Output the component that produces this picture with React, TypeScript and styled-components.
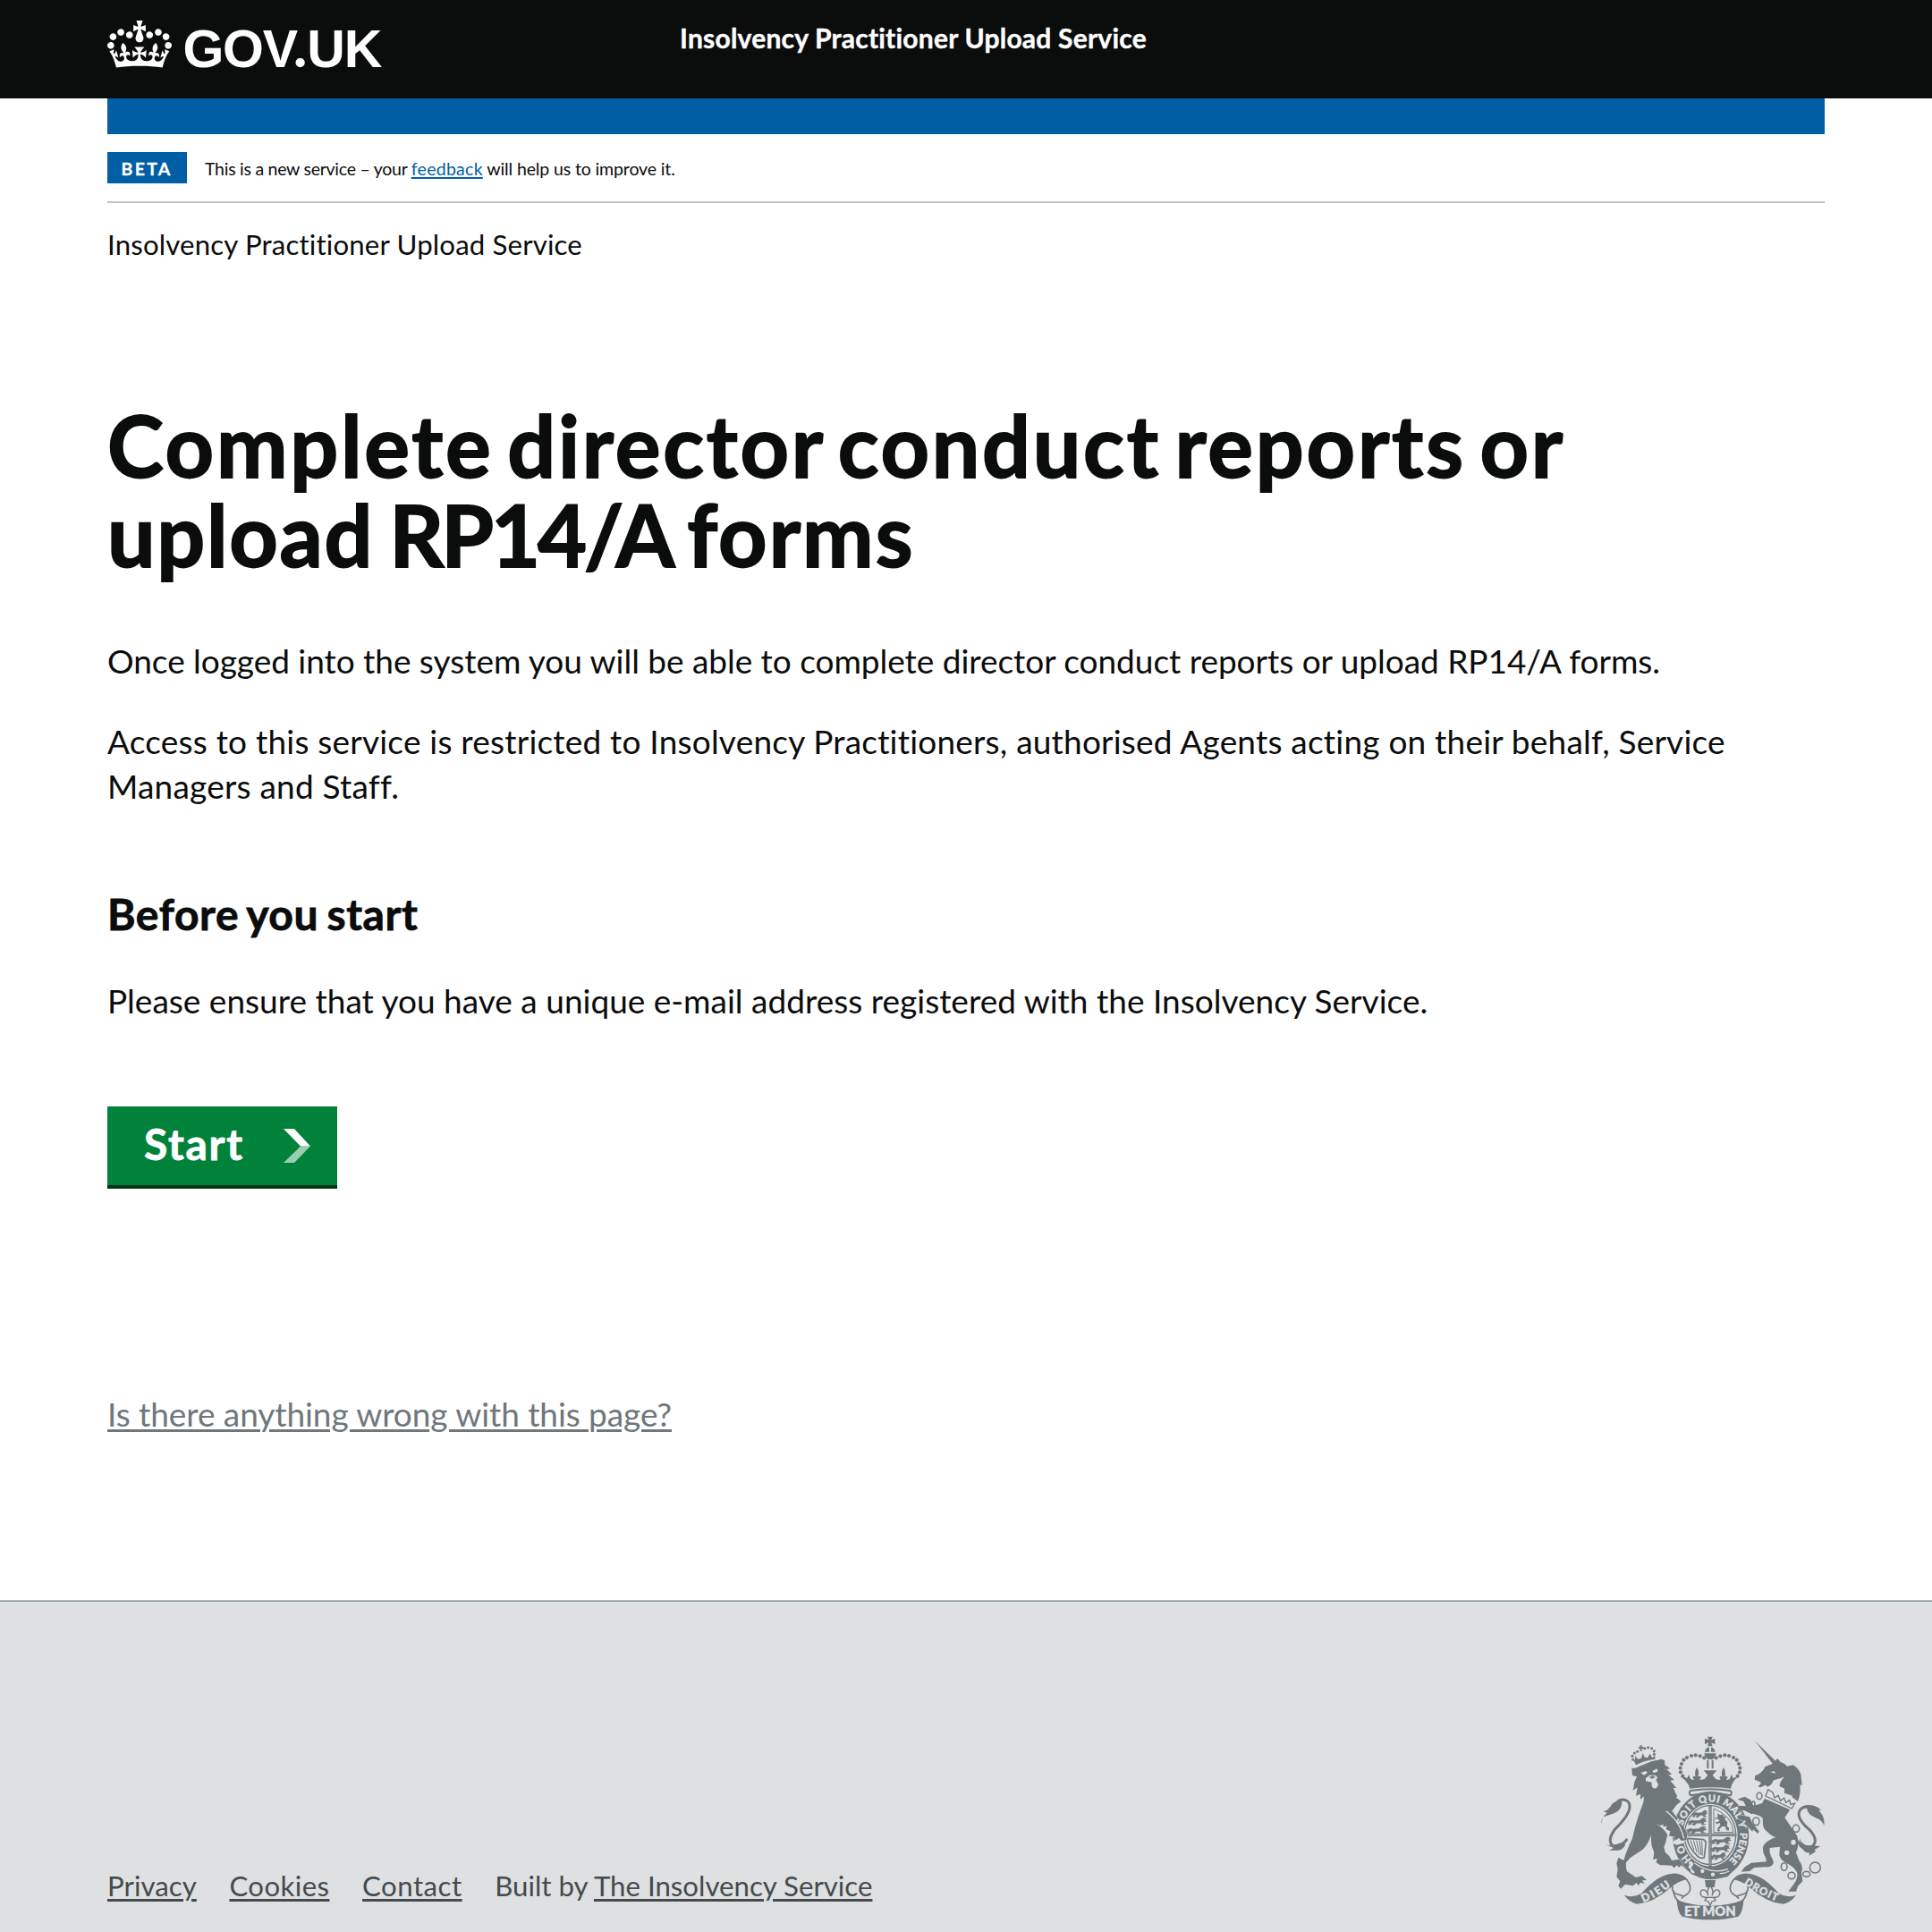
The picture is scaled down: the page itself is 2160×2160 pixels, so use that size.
import React from "react";
import styled, { createGlobalStyle } from "styled-components";

const INK = "#0b0c0c";
const BLUE = "#005ea5";
const CREST = "#6f777b";
const GREY = "#dee0e2";

const GlobalStyle = createGlobalStyle`
  body {
    margin: 0;
    background: #fff;
    color: ${INK};
    font-family: Lato, "Open Sans", sans-serif;
  }
`;

const Page = styled.div`
  display: flex;
  flex-direction: column;
  height: 2160px;
  overflow: hidden;
`;

const Header = styled.header`
  display: grid;
  grid-template-columns: 640px 1fr;
  align-items: start;
  box-sizing: border-box;
  height: 110px;
  padding: 0 120px;
  background: ${INK};
  color: #fff;
`;

const Logo = styled.a`
  display: flex;
  align-items: flex-start;
  padding-top: 20px;
  gap: 12.5px;
  color: #fff;
`;

const CrownIcon = styled.svg`
  display: block;
  width: 72px;
  height: 53px;
  margin-top: 3px;
  fill: currentColor;
`;

const LogoText = styled.span`
  display: block;
  font: 700 59px/60px "Liberation Sans", Arial, sans-serif;
  letter-spacing: -1.3px;
`;

const LogoDot = styled.span`
  display: inline-block;
  width: 15.2px;
  margin-left: -3.6px;
  text-align: center;
  font: 900 62px/1 Lato, sans-serif;
  letter-spacing: 0;
`;

const ServiceName = styled.span`
  padding: 24px 0 0 0;
  font-size: 30px;
  font-weight: 700;
  line-height: 36px;
  letter-spacing: 0.22px;
  -webkit-text-stroke: 0.4px #fff;
`;

const Container = styled.div`
  display: flex;
  flex-direction: column;
  align-items: flex-start;
  margin: 0 120px;
`;

const BlueBar = styled.div`
  width: 100%;
  height: 40px;
  background: ${BLUE};
`;

const PhaseBanner = styled.div`
  display: flex;
  align-items: center;
  gap: 20px;
  width: 100%;
  padding: 20px 0;
  border-bottom: 2px solid #bfc1c3;
`;

const PhaseTag = styled.strong`
  box-sizing: border-box;
  width: 89px;
  height: 35px;
  padding: 1px 0 0 15.5px;
  background: ${BLUE};
  color: #fff;
  font-size: 19.5px;
  line-height: 35px;
  letter-spacing: 2.3px;
  -webkit-text-stroke: 0.3px #fff;
`;

const PhaseText = styled.span`
  font-size: 19.5px;
  line-height: 33px;
  padding-top: 2px;
  white-space: pre;
`;

const Track = styled.span<{ $spacing: number; $word?: number }>`
  letter-spacing: ${(p) => p.$spacing}px;
  word-spacing: ${(p) => p.$word ?? 0}px;
`;

const FeedbackLink = styled.a`
  color: ${BLUE};
  letter-spacing: 0.27px;
  text-decoration: underline;
  text-decoration-thickness: 2px;
  text-underline-offset: 2px;
`;

const Proposition = styled.p`
  margin: 26px 0 0;
  font-size: 31.2px;
  line-height: 40px;
  letter-spacing: 0.16px;
`;

const Title = styled.h1`
  display: flex;
  flex-direction: column;
  margin: 154px 0 0;
  font-size: 95px;
  line-height: 100px;
  -webkit-text-stroke: 1.8px ${INK};
  white-space: nowrap;
`;

const Paragraph = styled.p<{ $top: number; $spacing: number }>`
  margin: ${(p) => p.$top}px 0 0;
  width: 1820px;
  font-size: 37px;
  line-height: 50px;
  letter-spacing: ${(p) => p.$spacing}px;
`;

const Subtitle = styled.h2`
  margin: 88px 0 0;
  font-size: 48px;
  line-height: 60px;
  letter-spacing: 0.6px;
  word-spacing: -3px;
  -webkit-text-stroke: 0.8px ${INK};
`;

const StartButton = styled.a`
  display: flex;
  align-items: center;
  justify-content: space-between;
  box-sizing: border-box;
  width: 257px;
  height: 92px;
  margin-top: 93px;
  padding: 0 30px 0 41px;
  background: #00823b;
  border-bottom: 4px solid #003618;
  color: #fff;
  font-size: 48px;
  font-weight: 700;
  line-height: 84px;
  letter-spacing: 1.7px;
  -webkit-text-stroke: 0.8px #fff;
`;

const StartLabel = styled.span`
  padding-bottom: 3px;
`;

const Chevron = styled.svg`
  display: block;
  width: 30px;
  height: 38px;
`;

const ProblemLink = styled.a`
  margin-top: 227px;
  color: ${CREST};
  font-size: 37px;
  line-height: 50px;
  letter-spacing: -0.07px;
  text-decoration: underline;
  text-decoration-thickness: 3px;
  text-underline-offset: 3px;
`;

const Footer = styled.footer`
  display: flex;
  justify-content: space-between;
  align-items: flex-start;
  flex: 1;
  box-sizing: border-box;
  margin-top: 183px;
  padding: 150px 120px 0;
  background: ${GREY};
  border-top: 2px solid #a1acb2;
  color: #454a4c;
`;

const FooterLinks = styled.nav`
  display: flex;
  gap: 36.6px;
  padding-top: 147px;
  font-size: 31.2px;
  line-height: 40px;
`;

const FooterLink = styled.a<{ $spacing?: number }>`
  letter-spacing: ${(p) => p.$spacing ?? 0}px;
  text-decoration: underline;
  text-decoration-thickness: 3px;
  text-underline-offset: 3px;
`;

const Crest = styled.svg`
  display: block;
  width: 250px;
  height: 206.67px;
`;

const Crown = () => (
  <CrownIcon viewBox="0 0 132 97">
    <path d="M25 30.2c3.5 1.5 7.7-.2 9.1-3.7 1.5-3.6-.2-7.8-3.9-9.2-3.6-1.4-7.6.3-9.1 3.9-1.4 3.5.3 7.5 3.9 9zM9 39.5c3.6 1.5 7.8-.2 9.2-3.7 1.5-3.6-.2-7.8-3.9-9.1-3.6-1.5-7.6.2-9.1 3.8-1.4 3.5.3 7.5 3.8 9zM4.4 57.2c3.5 1.5 7.7-.2 9.1-3.8 1.5-3.6-.2-7.7-3.9-9.1-3.5-1.5-7.6.3-9.1 3.8-1.4 3.5.3 7.6 3.9 9.1zm38.3-21.4c3.5 1.5 7.7-.2 9.1-3.8 1.5-3.6-.2-7.7-3.9-9.1-3.6-1.5-7.6.3-9.1 3.8-1.3 3.6.4 7.7 3.9 9.1zm64.4-5.6c-3.6 1.5-7.8-.2-9.1-3.7-1.5-3.6.2-7.8 3.8-9.2 3.6-1.4 7.7.3 9.2 3.9 1.3 3.5-.4 7.5-3.9 9zm15.9 9.3c-3.6 1.5-7.7-.2-9.1-3.7-1.5-3.6.2-7.8 3.7-9.1 3.6-1.5 7.7.2 9.2 3.8 1.5 3.5-.3 7.5-3.8 9zm4.7 17.7c-3.6 1.5-7.8-.2-9.2-3.8-1.5-3.6.2-7.7 3.9-9.1 3.6-1.5 7.7.3 9.2 3.8 1.3 3.5-.4 7.6-3.9 9.1zM89.3 35.8c-3.6 1.5-7.8-.2-9.2-3.8-1.4-3.6.2-7.7 3.9-9.1 3.6-1.5 7.7.3 9.2 3.8 1.4 3.6-.3 7.7-3.9 9.1zM69.7 17.7l8.9 4.7V9.3l-8.9 2.8c-.2-.3-.5-.6-.9-.9L72.4 0H59.6l3.5 11.2c-.3.3-.6.5-.9.9l-8.8-2.8v13.1l8.8-4.7c.3.3.6.7.9.9l-5 15.4v.1c-.2.8-.4 1.6-.4 2.4 0 4.1 3.1 7.5 7 8.1h.2c.3 0 .7.1 1 .1.4 0 .7 0 1-.1h.2c4-.6 7.1-4.1 7.1-8.1 0-.8-.1-1.7-.4-2.4V34l-5.1-15.4c.4-.2.7-.6 1-.9zM66 92.8c16.9 0 32.8 1.1 47.1 3.2 4-16.9 8.9-26.7 14-33.5l-9.6-3.4c1 4.9 1.1 7.2 0 10.2-1.5-1.4-3-4.3-4.2-8.7L108.6 76c2.8-2 5-3.2 7.5-3.3-4.4 9.4-10 11.9-13.6 11.2-4.3-.8-6.3-4.6-5.6-7.9 1-4.7 5.7-5.9 8-.5 4.3-8.7-3-11.4-7.6-8.8 7.1-7.2 7.9-13.5 2.1-21.1-8 6.1-8.1 12.3-4.5 20.8-4.7-5.4-12.1-2.5-9.5 6.2 3.4-5.2 7.9-2 7.2 3.1-.6 4.3-6.4 7.8-13.5 7.2-10.3-.9-10.9-8-11.2-13.8 2.5-.5 7.1 1.8 11 7.3L80.2 60c-4.1 4.4-8 5.3-12.3 5.4 1.4-4.4 8-11.6 8-11.6H55.5s6.4 7.2 7.9 11.6c-4.2-.1-8-1-12.3-5.4l1.4 16.4c3.9-5.5 8.5-7.7 10.9-7.3-.3 5.8-.9 12.8-11.1 13.8-7.2.6-12.9-2.9-13.5-7.2-.7-5 3.8-8.3 7.1-3.1 2.7-8.7-4.6-11.6-9.4-6.2 3.7-8.5 3.6-14.7-4.6-20.8-5.8 7.6-5 13.9 2.2 21.1-4.7-2.6-11.9.1-7.7 8.8 2.3-5.5 7.1-4.2 8.1.5.7 3.3-1.3 7.1-5.7 7.9-3.5.7-9-1.8-13.5-11.2 2.5.1 4.7 1.3 7.5 3.3l-4.7-15.4c-1.2 4.4-2.7 7.2-4.3 8.7-1.1-3-.9-5.3 0-10.2l-9.5 3.4c5 6.9 9.9 16.7 14 33.5 14.8-2.1 30.8-3.2 47.7-3.2z" />
  </CrownIcon>
);

const CROWN_PEARLS: [number, number][] = [
  [376, 104], [362, 98], [347, 95], [333, 97], [318, 103], [307, 111], [300, 124], [296, 138], [297, 152], [304, 165],
];
const LION_PEARLS: [number, number][] = [
  [137, 110], [135, 98], [142, 88], [152, 83], [176, 72], [188, 69], [200, 72], [208, 81], [208, 92],
];
const CHAIN: [number, number, number, number][] = [
  [561, 232, 9, 11], [541, 258, 5, 8], [550, 317, 11, 13], [684, 341, 11, 12],
  [644, 469, 10, 13], [669, 499, 12, 11], [719, 494, 12, 9], [748, 472, 18, 18],
];
const PASSANT =
  "M0 12c4-5 8-3 11-1l14-1c5-2 6-8 12-8l6 3-3 5 5 3-7 2-2 6 6 3h-10l-2-6-12 1-4 6h-8l4-7-5-1-3 7h-7l4-9c-3 0-4 2-6 5 0-5 2-8 6-8";

const RoyalArms = () => (
  <Crest viewBox="30 31 750 620" fill={CREST}>
    <defs>
      <path id="garter" d="M398 473A98 111 0 0 1 398 251A98 111 0 0 1 398 473" />
      <path id="ribbonLeft" d="M172 589Q225 568 276 524" />
      <path id="ribbonRight" d="M509 526Q560 562 632 590" />
    </defs>

    {/* crown */}
    <path d="M387 33h17l-4 11 12-5v19l-12-5 4 12h-17l4-12-13 5V39l13 5z" />
    <path d="M378 84q2-13 15-16v16zM399 68q12 3 14 16h-14zM376 89h40q-3 17-13 20h-13q-11-4-14-20zM385 111h6v29h-6zM401 111h6v29h-6z" />
    {CROWN_PEARLS.map(([x, y]) => (
      <g key={x + y}>
        <circle cx={x} cy={y} r="6.2" />
        <circle cx={792 - x} cy={y} r="6.2" />
      </g>
    ))}
    <path d="M303 166l16 6 5-12 7 16 12 2-6-9q6-7 10-2-5-14 4-31 10 14 4 31 7-5 10 2l-4 9 15-2 12-14-14-16h44l-14 16 12 14 15 2-4-9q3-7 10-2-6-17 4-31 9 17 4 31 4-5 10 2l-6 9 12-2 7-16 5 12 16-6q-22 22-24 41-66-8-137 0-4-19-31-41z" />
    <path d="M330 214q66-11 132 0 10 4 2 16-64-16-133 0-9-10-1-16z" fill="none" stroke={CREST} strokeWidth="6" />

    {/* garter and shield */}
    <ellipse cx="398" cy="364" rx="128" ry="148" />
    <ellipse cx="396" cy="363" rx="92" ry="105" fill={GREY} />
    <ellipse cx="396" cy="363" rx="86" ry="99" fill="none" stroke={CREST} strokeWidth="4" />
    <path d="M396 262v208M306 362h178" stroke={CREST} strokeWidth="10" />
    <path d="M396 266v200M310 362h172" stroke={GREY} strokeWidth="1.6" />
    <g stroke={CREST} strokeWidth="1.5">
      <path d={PASSANT} transform="translate(342 278)" />
      <path d={PASSANT} transform="translate(328 304) scale(1.25 1)" />
      <path d={PASSANT} transform="translate(323 332) scale(1.35 1)" />
      <path d={PASSANT} transform="translate(406 368) scale(1.35 1)" />
      <path d={PASSANT} transform="translate(406 394) scale(1.25 1)" />
      <path d={PASSANT} transform="translate(404 420) scale(1 1)" />
    </g>
    <path d="M408 274v80h66q-3-55-66-80z" fill="none" stroke={CREST} strokeWidth="3" />
    <path d="M420 290l10 6 8-4 2 8 10 2-6 6 10 12-2 12 8 8-2 8-8-2-4-12-10 0-10 10 4 6-10 0 2-12 8-8-2-8-10 4-6-8 8 2 8-6-8-6-8 2 2-6 8 0z" />
    <path d="M318 374l56 4 8 8-6 52q-14 6-22-4-28-26-36-60z" fill="none" stroke={CREST} strokeWidth="5" />
    <path d="M330 380l12 34M340 380l12 42M350 381l10 48M360 381l6 50M368 383l2 48" stroke={CREST} strokeWidth="3" />
    <path d="M345 458q60 40 110 20l14 8-14 16q-60 18-118-12z" />
    <path d="M340 455q58 42 116 22M460 484q-16 8-32 8" fill="none" stroke={GREY} strokeWidth="4" />
    <circle cx="370" cy="484" r="6.5" fill={GREY} />
    <circle cx="405" cy="495" r="6.5" fill={GREY} />
    <path d="M334 448q-16 0-10 16-8 8 4 14-2 14 16 16 4-10-4-14-10-6 0-14 4-10-6-18z" fill={GREY} stroke={CREST} strokeWidth="4" />

    {/* lion */}
    <path d="M308 376l-2 14-22 6-14-6 10-20z" fill={GREY} />
    <path
      d="M133 138l12 0 55-23 32-7 11 4 1 16 18 12-12 2 18 18-12 0 19 18-13 2 21 25-11-1 14 31-6 0 18 15-15 12-15 20q20 26 40 54l12 24-4 20-17 2-8-10-13 10-2-14-18-2 4-16-14-6 2-12-12 4 2-8-13 3-14-7q28 16 40 38l-6 24-6 18 4 16 14 14 8 14 26-4 10 14 6 16-10-10-8 8-6-8-10 9-8-8q-24-2-38-1l-14-9 3-14-14 4q6-20 2-30-10-20-8-54-8 30-28 50l-42 28-14 16q-2 16 3 30l16 10 14 10 20-5 16 14-15 1 9 11-14-4-8 10-6-9-12 10-26-5-15 15-8-10 6-15-12-15 4-25-4-20 6-20 18 10 6-20 14-35 8-16 10-40 12-40 16-44 2-20-12 10 0-18-15 6 5-28-15 10 5-28 8-18-15-4z"
      stroke={GREY}
      strokeWidth="3"
      paintOrder="stroke"
    />
    <path d="M248 282q46 34 60 92" fill="none" stroke={GREY} strokeWidth="4" />
    <path d="M163 154l18-6 4 6-10 8zM202 148l16-8 2 10-14 4zM180 172l12-10 20 0 8 8-6 8 8 14q-4 18-16 14-8-6-6-20-10-2-20-4z" fill={GREY} />
    <path d="M190 168l14-4 8 4-10 6z" />
    <path d="M118 376Q92 410 68 398Q50 380 76 344Q136 286 124 256Q110 236 84 250" fill="none" stroke={CREST} strokeWidth="9" />
    <path d="M32 326q-4-20 18-38l-12-4q18-4 28-24 14-16 34-10 0 30-26 40l-36 12q-6 8-6 24zM46 394q24 8 52-6l14 6q-10 22-30 20l-24 0 14-8z" />
    <path d="M147 128q30-16 65-20l-2-12-8 8-8-14-8 14-10-2-6-14-6 18-10 2-10-10 0 14-6-2z" />
    <path d="M160 62h8l-2 6 6-2v8l-6-1 2 8h-8l2-8-6 1v-8l6 2z" />
    {LION_PEARLS.map(([x, y]) => (
      <circle key={x + y} cx={x} cy={y} r="4.6" />
    ))}
    <path d="M138 136q40-20 96-30" fill="none" stroke={GREY} strokeWidth="3" />

    {/* unicorn */}
    <path d="M546 47l78 76-14 6z" />
    <path d="M622 106l10 12 14 6 8 8 20-4q16 8 26 30l4 38-7-2q4 30-7 56l-20-15 2-4-27-9 0-15-16-8q-2-12 16-32l-14 6-22 6-8 14-12 8-8-6-16 8-8-2 10-14-12-6-10-4 2-14q22-6 34-30l22-8z" />
    <path d="M598 152l12-4 6 8-10-2z" fill={GREY} />
    <path d="M578 240l86 38-18 26q20 30 42 62 8 30-4 56l10 26q16 22 8 40l4 30-16 16-6 18-26 0 18-24q14-18 12-38-10-22-38-34-18-10-22-26l2-28-34 4q-2 16 4 28 10 16 8 24-6 14-26 12l-38 2-16 12-28 2 12-16 22-14 50-4q2-8-8-26-8-24 4-34 12-14 36-22-16-4-28-18-14-8-15-26l-2-50q-4-26 13-40z" />
    <path d="M590 210l-8 22 88 42 10-18-14 4-4-14-12 8-6-16-12 10-8-18-12 8-6-18z" fill={GREY} stroke={CREST} strokeWidth="4" />
    <path
      d="M490 242l22-8 18 10 12 18 26 4-4 22-30 4-24-12-20 4 8 12 30 6 10 22 22 26-4 8-16-14-2 8-18-20-4 8-8-24-22-10-12-26 18-16 24 2-8-16-18-6z"
      stroke={GREY}
      strokeWidth="3"
      paintOrder="stroke"
    />
    <path d="M545 264l36-12v60l-20-14-26-8z" />
    {CHAIN.map(([x, y, rx, ry]) => (
      <ellipse key={x} cx={x} cy={y} rx={rx} ry={ry} fill={GREY} stroke={CREST} strokeWidth="4.5" />
    ))}
    <ellipse cx="675" cy="387" rx="8" ry="9" fill={GREY} />
    <ellipse cx="653" cy="422" rx="8" ry="8" fill={GREY} />
    <path d="M690 382Q704 418 734 404Q764 384 730 346Q680 304 698 278Q712 262 736 270" fill="none" stroke={CREST} strokeWidth="9" />
    <path d="M700 276q22-24 58-6l10 10-8 0q22 22 18 52-6-20-30-28-26-10-28-32zM696 372q8 28 38 26l32 2-20 12 4 6-22 14 2-10q-28 4-34-50z" />

    <g fill={GREY} stroke={GREY} strokeWidth="1" fontFamily="Lato, sans-serif" fontWeight="900" fontSize="33">
      <text><textPath href="#garter" startOffset="11%" textLength="58">HO</textPath></text>
      <text><textPath href="#garter" startOffset="29.8%" textLength="84">SOIT</textPath></text>
      <text><textPath href="#garter" startOffset="44.2%" textLength="66">QUI</textPath></text>
      <text><textPath href="#garter" startOffset="56%" textLength="72">MAL</textPath></text>
      <text><textPath href="#garter" startOffset="68.5%">Y</textPath></text>
      <text><textPath href="#garter" startOffset="74%" textLength="104">PENSE</textPath></text>
    </g>

    {/* motto ribbon */}
    <path d="M108 564q30 12 58-6Q222 494 270 492q32-2 48 20-30 6-56 28Q206 590 150 594q-28-8-42-30z" />
    <path d="M684 564q-30 12-58-6Q570 494 522 492q-32-2-48 20 30 6 56 28Q586 590 642 594q28-8 42-30z" />
    <g fill="none" stroke={CREST} strokeWidth="5">
      <path d="M270 534q-6 22 18 28l20 6q26-12 20-36-8-24-30-34M272 548q4 28 20 38M308 568l-8 8" />
      <path d="M522 534q6 22-18 28l-20 6q-26-12-20-36 8-24 30-34M520 548q-4 28-20 38M484 568l8 8" />
    </g>
    <path d="M284 580q50 20 112 20t112-20q-2 42-18 56-44 11-94 11t-94-11q-16-14-18-56z" />
    <g fill={GREY} stroke={GREY} strokeWidth="1.2" fontFamily="Lato, sans-serif" fontWeight="900">
      <text x="309" y="635" fontSize="43" textLength="173" lengthAdjust="spacingAndGlyphs">ET MON</text>
      <text fontSize="37"><textPath href="#ribbonLeft" textLength="108">DIEU</textPath></text>
      <text fontSize="35"><textPath href="#ribbonRight" textLength="124">DROIT</textPath></text>
    </g>

    {/* badge */}
    <path d="M378 514h36l-4 24h-28z" />
    <path d="M396 532q14 18 6 34 8-24 22-18 10 10-2 22l-14 4 6 8-12 4-6 12-6-12-12-4 6-8-14-4q-12-12-2-22 14-6 22 18-8-16 6-34z" fill={GREY} stroke={CREST} strokeWidth="4" />
    <path d="M376 572h40" stroke={CREST} strokeWidth="4" />
  </Crest>
);

export default function App() {
  return (
    <Page>
      <GlobalStyle />
      <Header>
        <Logo>
          <Crown />
          <LogoText>
            GOV<LogoDot>.</LogoDot>UK
          </LogoText>
        </Logo>
        <ServiceName>Insolvency Practitioner Upload Service</ServiceName>
      </Header>
      <Container>
        <BlueBar />
        <PhaseBanner>
          <PhaseTag>BETA</PhaseTag>
          <PhaseText>
            <Track $spacing={-0.26}>This is a new service – your </Track>
            <FeedbackLink>feedback</FeedbackLink>
            <Track $spacing={-0.12}> will help us to improve it.</Track>
          </PhaseText>
        </PhaseBanner>
        <Proposition>Insolvency Practitioner Upload Service</Proposition>
        <Title>
          <Track $spacing={2.75} $word={-10}>
            Complete director conduct reports or
          </Track>
          <span>
            <Track $spacing={1.7} $word={-7.5}>
              {"upload "}
            </Track>
            <Track $spacing={-3.1}>{"RP14/A "}</Track>
            <Track $spacing={2}>forms</Track>
          </span>
        </Title>
        <Paragraph $top={66.5} $spacing={-0.03}>
          Once logged into the system you will be able to complete director conduct reports or upload RP14/A forms.
        </Paragraph>
        <Paragraph $top={40} $spacing={0.21}>
          Access to this service is restricted to Insolvency Practitioners, authorised Agents acting on their behalf,
          Service Managers and Staff.
        </Paragraph>
        <Subtitle>Before you start</Subtitle>
        <Paragraph $top={42} $spacing={0.01}>
          Please ensure that you have a unique e-mail address registered with the Insolvency Service.
        </Paragraph>
        <StartButton>
          <StartLabel>Start</StartLabel>
          <Chevron viewBox="0 0 30 38">
            <path d="M0 0h12l18 19.5H19z" fill="#fff" />
            <path d="M19 19.5h11L12 38H0z" fill="#fff" opacity=".6" />
          </Chevron>
        </StartButton>
        <ProblemLink>Is there anything wrong with this page?</ProblemLink>
      </Container>
      <Footer>
        <FooterLinks>
          <FooterLink $spacing={0.05}>Privacy</FooterLink>
          <FooterLink $spacing={0.4}>Cookies</FooterLink>
          <FooterLink $spacing={0.5}>Contact</FooterLink>
          <span>
            Built by <FooterLink>The Insolvency Service</FooterLink>
          </span>
        </FooterLinks>
        <RoyalArms />
      </Footer>
    </Page>
  );
}
